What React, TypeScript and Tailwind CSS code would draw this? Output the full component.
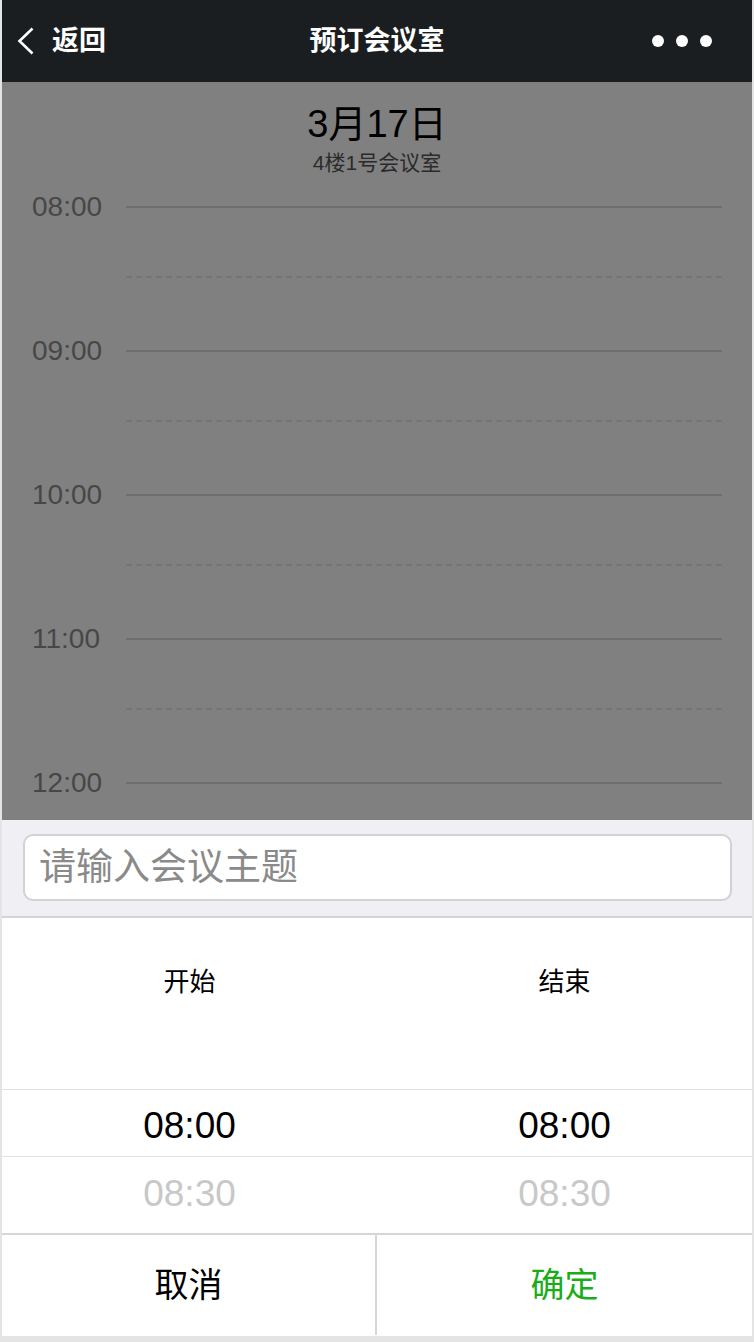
import React from "react";

const HOURS = ["08:00", "09:00", "10:00", "11:00", "12:00"];

export default function App() {
  return (
    <div className="h-[1342px] w-full bg-[#e4e4e4] font-['Liberation_Sans','Noto_Sans_CJK_SC',sans-serif]">
      <div className="mx-[2px] flex h-[1336px] flex-col overflow-hidden bg-white">
        {/* 顶部导航 */}
        <div className="grid h-[82px] shrink-0 grid-cols-[1fr_auto_1fr] items-center bg-[#1b1e21] text-white">
          <div className="flex items-center pl-[15px]">
            <svg width="17" height="28" viewBox="0 0 17 28" fill="none">
              <polyline points="15.5,1.5 2.5,14 15.5,26.5" stroke="white" strokeWidth="2.6" strokeLinejoin="miter" />
            </svg>
            <span className="ml-[18px] text-[27px] font-bold leading-none">返回</span>
          </div>
          <div className="text-[27px] font-bold leading-none">预订会议室</div>
          <div className="flex items-center justify-end gap-[12px] pr-[40px]">
            <span className="h-[12px] w-[12px] rounded-full bg-white" />
            <span className="h-[12px] w-[12px] rounded-full bg-white" />
            <span className="h-[12px] w-[12px] rounded-full bg-white" />
          </div>
        </div>

        {/* 遮罩下的日程 */}
        <div className="h-[738px] shrink-0 bg-[#808080] pt-[20px]">
          <div className="text-center text-[38px] leading-[44px] text-black">3月17日</div>
          <div className="mt-[4px] text-center text-[21px] leading-[26px] text-[#2a2a2a]">4楼1号会议室</div>
          <div className="mt-[16px] pr-[30px] pl-[30px]">
            {HOURS.map((h, i) => (
              <div key={h}>
                <div className="flex h-[30px] items-center">
                  <span className="w-[94px] text-[28px] leading-none text-[#474747]">{h}</span>
                  <div className="flex-1 border-t-2 border-[#6e6e6e]" />
                </div>
                {i < HOURS.length - 1 && (
                  <div className="mt-[40px] mb-[44px] flex h-[30px] items-center">
                    <span className="w-[94px]" />
                    <div className="flex-1 border-t-2 border-dashed border-[#757575]" />
                  </div>
                )}
              </div>
            ))}
          </div>
        </div>

        {/* 会议主题 */}
        <div className="h-[98px] shrink-0 border-b-2 border-[#d4d4d8] bg-[#efeff4] pt-[14px] pr-[20px] pl-[21px]">
          <input
            placeholder="请输入会议主题"
            className="h-[67px] w-full rounded-[10px] border-2 border-[#d1d1d6] bg-white px-[14px] text-[37px] text-black outline-none placeholder:text-[#8a8a8a]"
          />
        </div>

        {/* 时间选择 */}
        <div className="grid h-[172px] shrink-0 grid-cols-2 border-b border-[#e3e3e3] pt-[46px] text-center text-[26px] leading-[36px] text-black">
          <div>开始</div>
          <div>结束</div>
        </div>
        <div className="grid h-[67px] shrink-0 grid-cols-2 items-center border-b border-[#e3e3e3] pt-[4px] text-center text-[37px] leading-none text-black">
          <div>08:00</div>
          <div>08:00</div>
        </div>
        <div className="grid h-[78px] shrink-0 grid-cols-2 items-center border-b-2 border-[#d6d6d6] pb-[4px] text-center text-[37px] leading-none text-[#c8c8c8]">
          <div>08:30</div>
          <div>08:30</div>
        </div>

        {/* 按钮 */}
        <div className="grid h-[100px] shrink-0 grid-cols-2 text-[34px]">
          <button className="flex items-center justify-center border-r-2 border-[#d6d6d6] text-black">取消</button>
          <button className="flex items-center justify-center text-[#1aad19]">确定</button>
        </div>
      </div>
    </div>
  );
}
